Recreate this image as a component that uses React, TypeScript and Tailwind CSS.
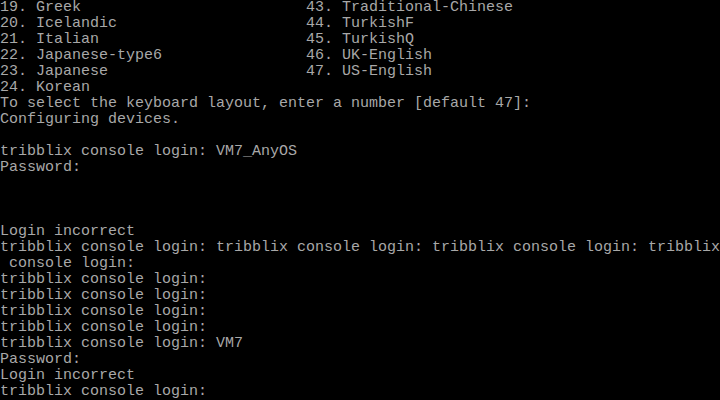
const lines: string[] = [
  "19. Greek                         43. Traditional-Chinese",
  "20. Icelandic                     44. TurkishF",
  "21. Italian                       45. TurkishQ",
  "22. Japanese-type6                46. UK-English",
  "23. Japanese                      47. US-English",
  "24. Korean",
  "To select the keyboard layout, enter a number [default 47]:",
  "Configuring devices.",
  "",
  "tribblix console login: VM7_AnyOS",
  "Password:",
  "",
  "",
  "",
  "Login incorrect",
  "tribblix console login: tribblix console login: tribblix console login: tribblix",
  " console login:",
  "tribblix console login:",
  "tribblix console login:",
  "tribblix console login:",
  "tribblix console login:",
  "tribblix console login: VM7",
  "Password:",
  "Login incorrect",
  "tribblix console login:",
];

export default function App() {
  return (
    <div className="h-[400px] w-[720px] overflow-hidden bg-black">
      <pre className="m-0 whitespace-pre font-['Liberation_Mono',monospace] text-[15px] leading-[16px] text-[#a8a8a8]">
        {lines.map((line, i) => (
          <div key={i} className="h-4">
            {line}
          </div>
        ))}
      </pre>
    </div>
  );
}
